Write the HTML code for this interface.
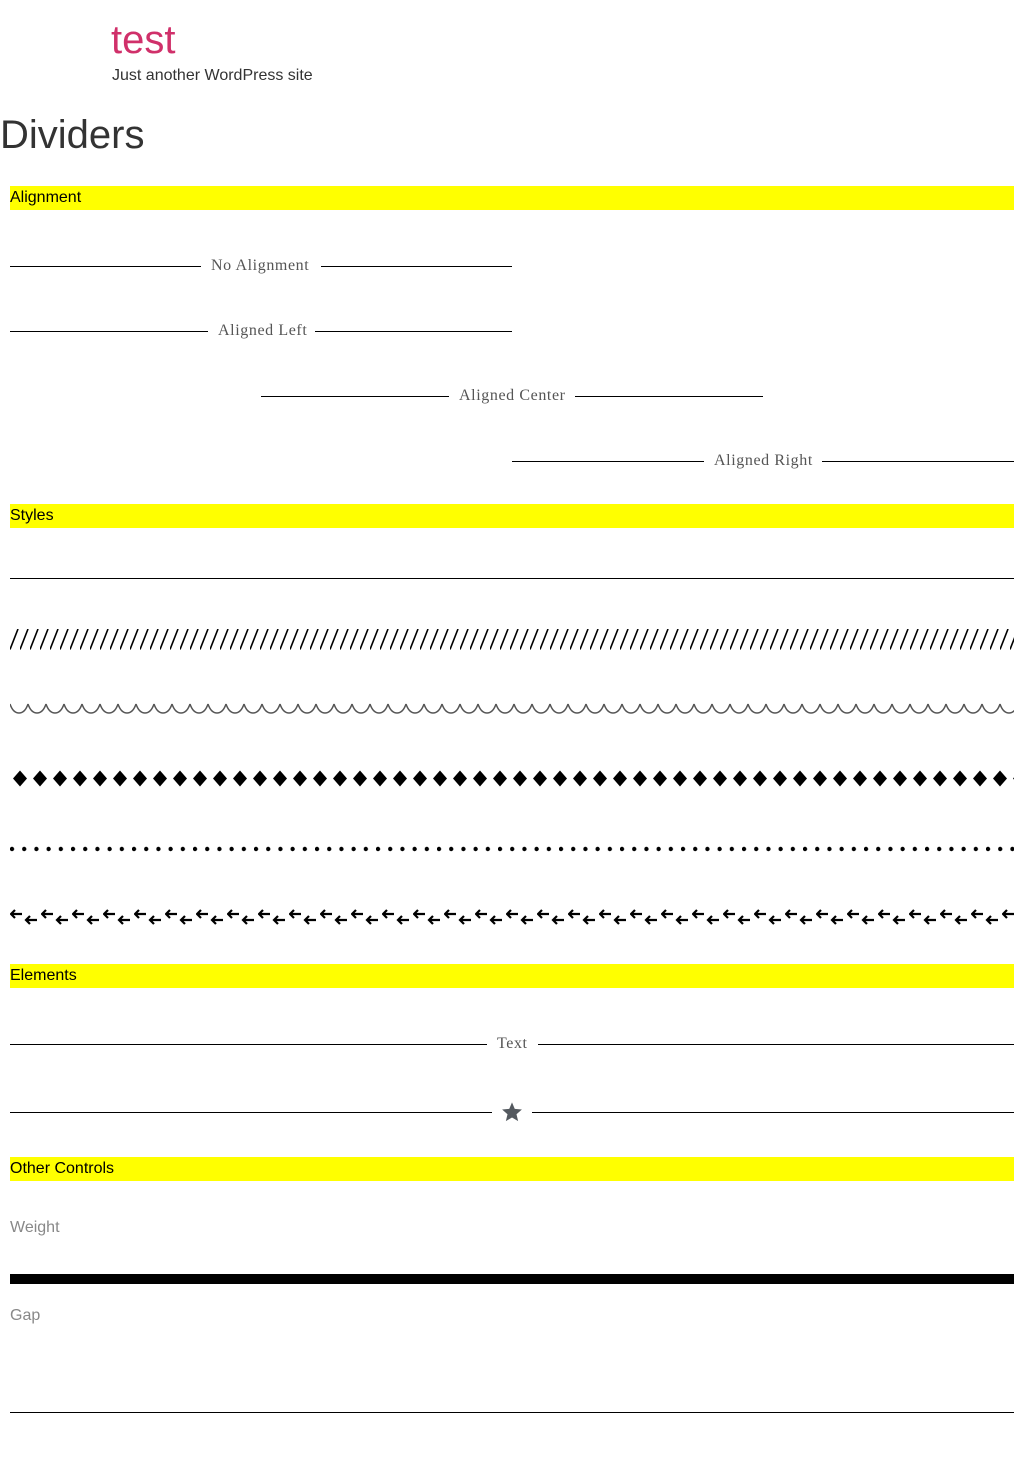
<!DOCTYPE html>
<html><head><meta charset="utf-8"><style>
body{margin:0;width:1024px;height:1473px;background:#fff;position:relative;font-family:"Liberation Sans",sans-serif;overflow:hidden}
.a{position:absolute;white-space:nowrap}
.bar{position:absolute;left:10px;width:1004px;height:24px;background:#ff0;font-size:16px;line-height:24px;color:#000}
.ln{position:absolute;height:1px;background:#000}
.s{position:absolute;font-family:"Liberation Serif",serif;font-size:16px;letter-spacing:0.6px;color:#555;line-height:20px}
</style></head><body>
<div class="a" style="left:111px;top:15px;font-size:40px;color:#d0306a;line-height:50px">test</div>
<div class="a" style="left:112px;top:66px;font-size:16px;color:#333;line-height:20px">Just another WordPress site</div>
<div class="a" style="left:0;top:110px;font-size:40px;color:#333;line-height:50px">Dividers</div>

<div class="bar" style="top:186px">Alignment</div>
<div class="ln" style="left:10px;width:191px;top:266px"></div><div class="s" style="left:211px;top:256px">No Alignment</div><div class="ln" style="left:321px;width:191px;top:266px"></div>
<div class="ln" style="left:10px;width:198px;top:331px"></div><div class="s" style="left:218px;top:321px">Aligned Left</div><div class="ln" style="left:315px;width:197px;top:331px"></div>
<div class="ln" style="left:261px;width:188px;top:396px"></div><div class="s" style="left:459px;top:386px">Aligned Center</div><div class="ln" style="left:575px;width:188px;top:396px"></div>
<div class="ln" style="left:512px;width:192px;top:461px"></div><div class="s" style="left:714px;top:451px">Aligned Right</div><div class="ln" style="left:822px;width:192px;top:461px"></div>

<div class="bar" style="top:504px">Styles</div>
<div class="ln" style="left:10px;width:1004px;top:578px"></div>

<svg class="a" style="left:10px;top:629px" width="1004" height="21">
<defs><pattern id="sl" width="10" height="21" patternUnits="userSpaceOnUse"><path d="M0,20.5 L8,0" stroke="#000" stroke-width="1.6"/></pattern></defs>
<rect width="1004" height="21" fill="url(#sl)"/></svg>

<svg class="a" style="left:10px;top:701px" width="1004" height="14">
<defs><pattern id="wv" width="18" height="14" patternUnits="userSpaceOnUse"><path d="M0,3 C2,9 5,12 9,12 C13,12 16,9 18,3" fill="none" stroke="#555" stroke-width="1.5"/></pattern></defs>
<rect width="1004" height="14" fill="url(#wv)"/></svg>

<svg class="a" style="left:10px;top:770px" width="1004" height="17">
<defs><pattern id="dm" width="20" height="17" patternUnits="userSpaceOnUse"><path d="M10,0.5 L17,8.5 L10,16.5 L3,8.5Z" fill="#000"/></pattern></defs>
<rect width="1004" height="17" fill="url(#dm)"/></svg>

<svg class="a" style="left:10px;top:845px" width="1004" height="8">
<defs><pattern id="dt" width="12.2" height="8" patternUnits="userSpaceOnUse"><circle cx="2" cy="4" r="2.2" fill="#000"/></pattern></defs>
<rect width="1004" height="8" fill="url(#dt)"/></svg>

<svg class="a" style="left:10px;top:909px" width="1004" height="16">
<defs><pattern id="ar" width="31" height="16" patternUnits="userSpaceOnUse"><path d="M1,5 L12,5 M5,1 L1,5 L5,9 M16,11 L27,11 M20,7 L16,11 L20,15" fill="none" stroke="#000" stroke-width="2.2"/></pattern></defs>
<rect width="1004" height="16" fill="url(#ar)"/></svg>

<div class="bar" style="top:964px">Elements</div>
<div class="ln" style="left:10px;width:477px;top:1044px"></div><div class="s" style="left:497px;top:1034px">Text</div><div class="ln" style="left:538px;width:476px;top:1044px"></div>
<div class="ln" style="left:10px;width:482px;top:1112px"></div>
<svg class="a" style="left:501px;top:1101px" width="22" height="22" viewBox="0 0 24 24"><path d="M12,1.5 L15,8.6 L22.8,9.3 L16.9,14.4 L18.7,22 L12,18 L5.3,22 L7.1,14.4 L1.2,9.3 L9,8.6Z" fill="#54595f"/></svg>
<div class="ln" style="left:532px;width:482px;top:1112px"></div>

<div class="bar" style="top:1157px">Other Controls</div>
<div class="a" style="left:10px;top:1218px;font-size:16px;color:#888;line-height:20px">Weight</div>
<div class="a" style="left:10px;top:1274px;width:1004px;height:10px;background:#000"></div>
<div class="a" style="left:10px;top:1306px;font-size:16px;color:#888;line-height:20px">Gap</div>
<div class="ln" style="left:10px;width:1004px;top:1412px"></div>
</body></html>
